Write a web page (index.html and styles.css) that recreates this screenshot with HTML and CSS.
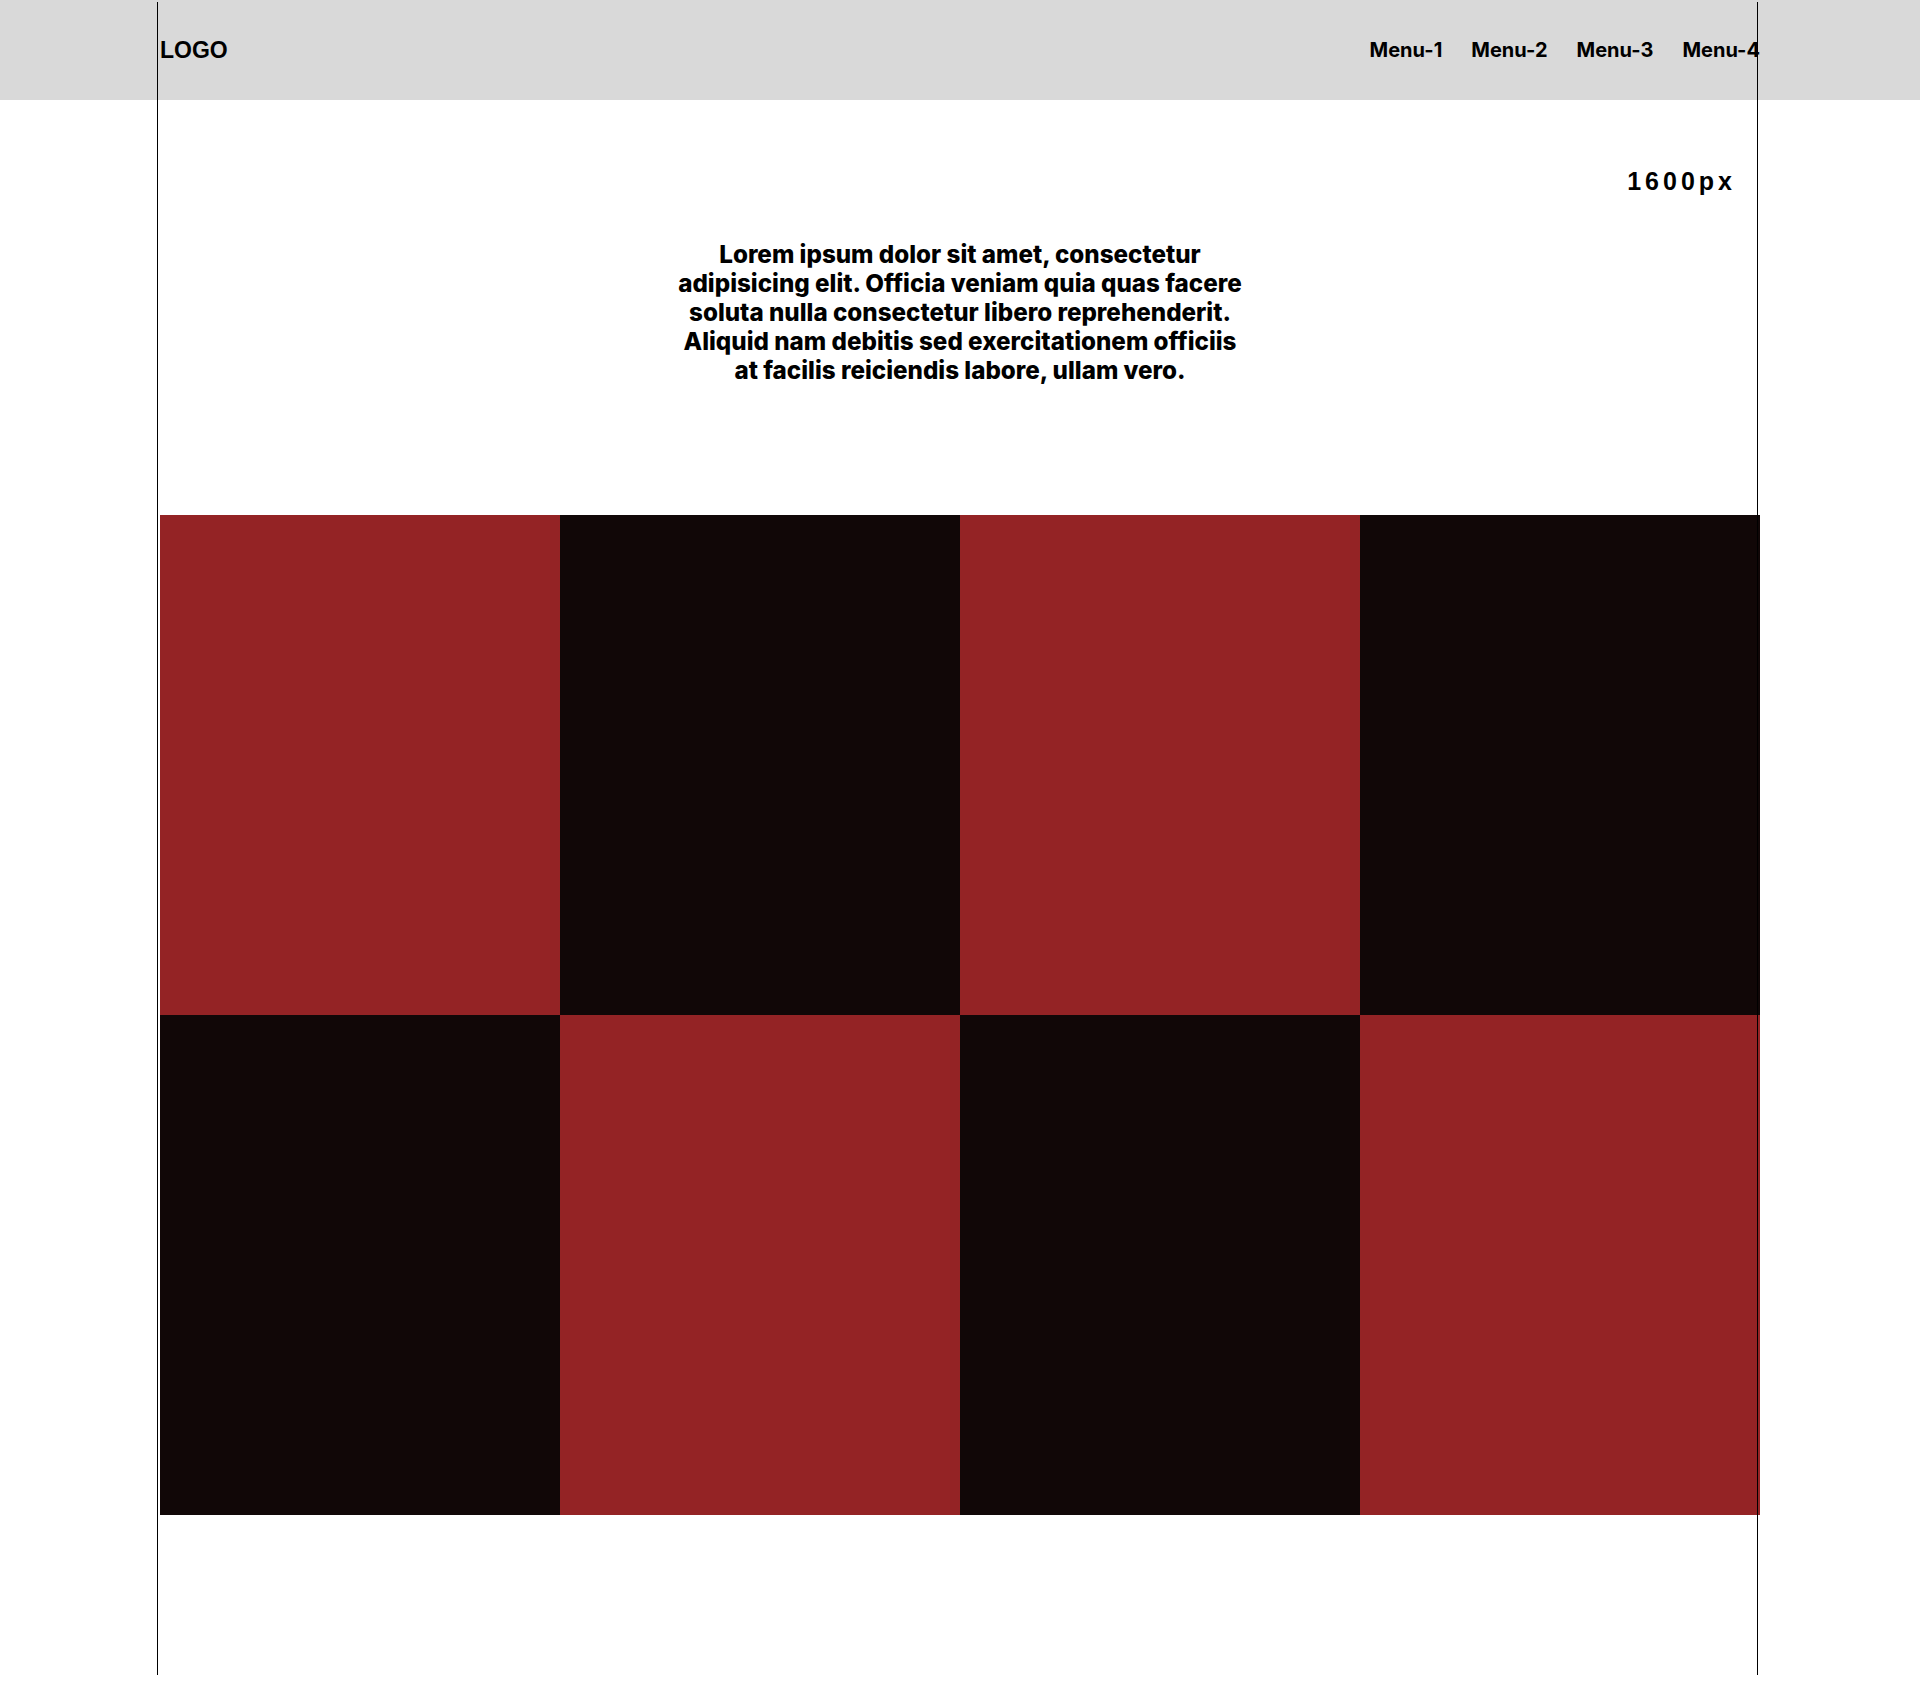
FILE: index.html
```html
<!DOCTYPE html>
<html lang="en">
<head>
<meta charset="utf-8">
<title>Layout</title>
<link rel="stylesheet" href="styles.css">
</head>
<body>
<header class="site-header">
  <div class="header-inner">
    <div class="logo">LOGO</div>
    <nav class="nav">
      <a class="nav-link" href="#">Menu-1</a>
      <a class="nav-link" href="#">Menu-2</a>
      <a class="nav-link" href="#">Menu-3</a>
      <a class="nav-link" href="#">Menu-4</a>
    </nav>
  </div>
</header>
<main class="main">
  <div class="width-label">1600px</div>
  <p class="intro">Lorem ipsum dolor sit amet, consectetur adipisicing elit. Officia veniam quia quas facere soluta nulla consectetur libero reprehenderit. Aliquid nam debitis sed exercitationem officiis at facilis reiciendis labore, ullam vero.</p>
  <div class="grid">
    <div class="cell red"></div>
    <div class="cell dark"></div>
    <div class="cell red"></div>
    <div class="cell dark"></div>
    <div class="cell dark"></div>
    <div class="cell red"></div>
    <div class="cell dark"></div>
    <div class="cell red"></div>
  </div>
</main>
<div class="guides"></div>
</body>
</html>
```
FILE: styles.css
```css
html, body {
  margin: 0;
  padding: 0;
}
body {
  font-family: Inter, "Liberation Sans", sans-serif;
  color: #000;
  background: #fff;
  min-height: 1681px;
  position: relative;
}
.site-header {
  background: #d9d9d9;
  height: 100px;
}
.header-inner {
  width: 1600px;
  margin: 0 auto;
  height: 100%;
  display: flex;
  align-items: center;
  justify-content: space-between;
}
.logo {
  font-family: "Liberation Sans", Arial, sans-serif;
  font-weight: 700;
  font-size: 23px;
}
.nav {
  display: flex;
  gap: 29px;
}
.nav-link {
  color: #000;
  text-decoration: none;
  font-family: Inter, "Liberation Sans", sans-serif;
  font-weight: 700;
  font-size: 20px;
}
.main {
  width: 1600px;
  margin: 0 auto;
}
.width-label {
  text-align: right;
  padding: 66px 24px 0 0;
  font-family: "Liberation Sans", Arial, sans-serif;
  font-weight: 700;
  font-size: 25px;
  letter-spacing: 4px;
  line-height: 30px;
}
.intro {
  width: 570px;
  margin: 44px auto 0;
  text-align: center;
  font-weight: 800;
  font-size: 24.2px;
  line-height: 29px;
}
.grid {
  margin-top: 130px;
  display: grid;
  grid-template-columns: repeat(4, 400px);
  grid-template-rows: repeat(2, 500px);
}
.red { background: #942325; }
.dark { background: #110707; }
.guides {
  position: absolute;
  left: 157px;
  top: 2px;
  width: 1599px;
  height: 1673px;
  border-left: 1px solid #000;
  border-right: 1px solid #000;
  pointer-events: none;
}
```
